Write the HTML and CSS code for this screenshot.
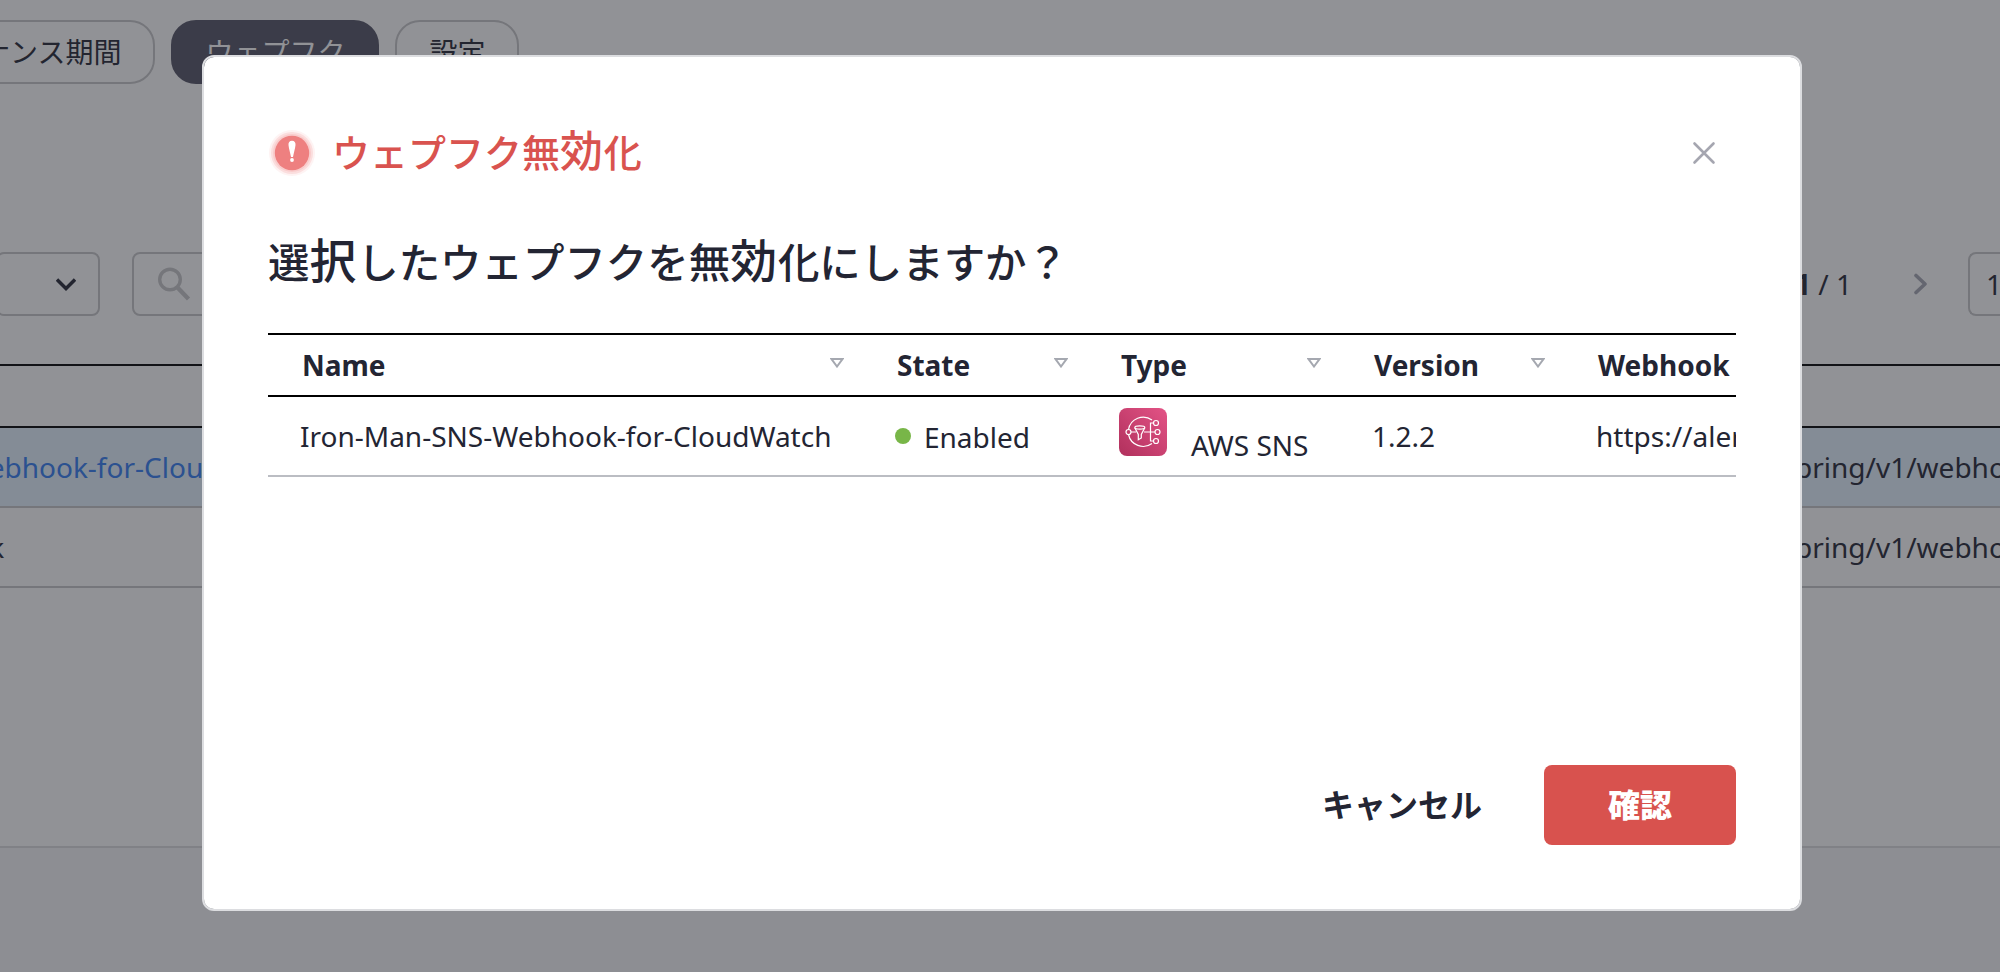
FILE: index.html
```html
<!DOCTYPE html>
<html lang="ja">
<head>
<meta charset="utf-8">
<title>ウェプフク</title>
<link rel="stylesheet" href="styles.css">
</head>
<body>
<div class="page">
  <nav class="tabs">
    <span class="tab">メンテナンス期間</span>
    <span class="tab tab-active">ウェプフク</span>
    <span class="tab">設定</span>
  </nav>
  <div class="toolbar">
    <div class="select">
      <svg width="20" height="13" viewBox="0 0 20 13" fill="none" stroke="#232533" stroke-width="3.4"><path d="M1 1.500L10 10.500L19 1.500"/></svg>
    </div>
    <div class="search">
      <svg width="34" height="34" viewBox="0 0 34 34" fill="none" stroke="#c7c7c8"><circle cx="13" cy="12.500" r="10.300" stroke-width="3.400"/><path d="M20.500 20.500L31.500 32" stroke-width="4.400"/></svg>
    </div>
    <div class="pager">
      <span class="pager-text"><b>1</b> / 1</span>
      <svg width="14" height="22" viewBox="0 0 14 22" fill="none" stroke="#a5a6b2" stroke-width="3.600" stroke-linecap="round" stroke-linejoin="round"><path d="M2 2.500L11 11L2 19.500"/></svg>
    </div>
    <div class="page-size">15</div>
  </div>
  <div class="list">
    <div class="list-head"></div>
    <div class="list-row selected"><span class="link">Iron-Man-SNS-Webhook-for-CloudWatch</span><span class="list-url">pring/v1/webhook</span></div>
    <div class="list-row"><span class="list-name">webhook</span><span class="list-url">pring/v1/webhook</span></div>
  </div>
  <div class="page-bottom"></div>
</div>
<div class="backdrop">
  <section class="modal">
    <header class="modal-head">
      <svg class="alert" width="48" height="48" viewBox="0 0 48 48">
        <circle cx="24" cy="24" r="23" fill="#fef3f3"/><circle cx="24" cy="24" r="21" fill="#fbdede"/><circle cx="24" cy="24" r="19" fill="#f9cccc"/><circle cx="24" cy="24" r="17.200" fill="#ee8080"/>
        <path d="M24 11.800C26.500 11.800 27.700 13.600 27.500 16C27.200 19.500 25.700 24 25 28H23C22.300 24 20.800 19.500 20.500 16C20.300 13.600 21.500 11.800 24 11.800Z" fill="#fff"/><circle cx="24" cy="31" r="1.900" fill="#fff"/>
      </svg>
      <h1 class="modal-title">ウェプフク無<span class="wide">効</span>化</h1>
      <svg class="close" width="24" height="24" viewBox="0 0 24 24" fill="none" stroke="#a5a6b0" stroke-width="2.600" stroke-linecap="round"><path d="M2.500 2.500L21.500 21.500M21.500 2.500L2.500 21.500"/></svg>
    </header>
    <p class="question">選<span class="wide">択</span>したウェプフクを無<span class="wide">効</span>化にしますか？</p>
    <div class="table">
      <div class="tr th-row">
        <div class="th th-first">Name<svg class="sort" width="14" height="10" viewBox="0 0 14 10"><path d="M1.500 1H12.500L7 8.500Z"/></svg></div>
        <div class="th">State<svg class="sort" width="14" height="10" viewBox="0 0 14 10"><path d="M1.500 1H12.500L7 8.500Z"/></svg></div>
        <div class="th">Type<svg class="sort" width="14" height="10" viewBox="0 0 14 10"><path d="M1.500 1H12.500L7 8.500Z"/></svg></div>
        <div class="th">Version<svg class="sort" width="14" height="10" viewBox="0 0 14 10"><path d="M1.500 1H12.500L7 8.500Z"/></svg></div>
        <div class="th">Webhook</div>
      </div>
      <div class="tr td-row">
        <div class="td td-first">Iron-Man-SNS-Webhook-for-CloudWatch</div>
        <div class="td state"><i class="dot"></i><span>Enabled</span></div>
        <div class="td type">
          <svg width="48" height="48" viewBox="0 0 48 48" fill="none" stroke="#fff" stroke-width="1.200">
            <defs><linearGradient id="sns" x1="0" y1="1" x2="1" y2="0"><stop offset="0" stop-color="#b0305c"/><stop offset="1" stop-color="#e35386"/></linearGradient></defs>
            <rect width="48" height="48" rx="8" fill="url(#sns)" stroke="none"/>
            <path d="M33 12A15 15 0 0 0 9.500 21.500M9.500 26.500A15 15 0 0 0 33 35.500"/>
            <circle cx="9.500" cy="24" r="2.500"/><circle cx="37" cy="15" r="2.500"/><circle cx="38.500" cy="24" r="2.500"/><circle cx="37" cy="33" r="2.500"/>
            <path d="M34.500 15H31.500V33H34.500M25 24H36M12 24H17"/>
            <ellipse cx="20.800" cy="19.500" rx="5" ry="1.600"/><path d="M15.800 19.800L19.300 26.500V31.800L22.300 30V26.500L25.800 19.800"/>
          </svg><span>AWS SNS</span>
        </div>
        <div class="td">1.2.2</div>
        <div class="td">https://alerting</div>
      </div>
    </div>
    <footer class="modal-foot">
      <button class="btn btn-cancel">キャンセル</button>
      <button class="btn btn-ok">確認</button>
    </footer>
  </section>
</div>
</body>
</html>
```
FILE: styles.css
```css
* { box-sizing: border-box; }
body {
  margin: 0;
  width: 2000px;
  height: 972px;
  overflow: hidden;
  font: 28px/40px "Noto Sans", "Noto Sans CJK JP", sans-serif;
  color: #232533;
  background: #fff;
}
svg { display: block; flex: none; }
.page { width: 2000px; height: 972px; overflow: hidden; display: flex; flex-direction: column; }
.tabs { display: flex; gap: 16px; margin-left: -136px; padding-top: 20px; }
.tab {
  height: 64px;
  padding: 0 32px;
  border: 2px solid #c7c7c8;
  border-radius: 25px;
  line-height: 59px;
  white-space: nowrap;
  font-family: "Noto Sans CJK JP", sans-serif;
}
.tab-active { background: #535364; border-color: #535364; color: #fff; }
.toolbar { display: flex; margin-top: 168px; height: 64px; }
.select, .search, .page-size { border: 2px solid #c7c7c8; border-radius: 8px; display: flex; align-items: center; }
.select { width: 104px; margin-left: -4px; justify-content: flex-end; padding-right: 22px; }
.search { width: 1000px; margin-left: 32px; padding-left: 23px; }
.pager { margin-left: auto; display: flex; align-items: center; gap: 62px; margin-right: 40px; }
.pager-text { white-space: nowrap; }
.page-size { width: 32px; border-right: 0; border-radius: 8px 0 0 8px; padding-left: 16px; overflow: hidden; }
.list { margin-top: 48px; border-top: 2px solid #000; }
.list-head { height: 62px; border-bottom: 2px solid #000; }
.list-row { height: 80px; border-bottom: 2px solid #c7c7c8; display: flex; align-items: center; justify-content: space-between; white-space: nowrap; overflow: hidden; }
.selected { background: #e5f2fe; }
.link { color: #337df2; margin-left: -229px; }
.list-name { margin-left: -117px; }
.list-url { width: 205px; overflow: hidden; }
.page-bottom { margin-top: 258px; flex: 1; border-top: 2px solid #dddddf; background: #f7f7f8; }
.backdrop {
  position: absolute;
  inset: 0;
  background: rgba(35, 37, 46, .5);
  padding: 55px 198px 61px 202px;
}
.modal {
  width: 1600px;
  height: 856px;
  background: #fff;
  background-clip: padding-box;
  border: 2px solid #dcdde0;
  border-radius: 12px;
  padding: 64px;
  display: flex;
  flex-direction: column;
}
.modal-head { display: flex; align-items: center; height: 64px; }
.modal-title {
  margin: 0 0 5px 16px;
  font: 500 38px/60px "Noto Sans CJK JP", sans-serif;
  color: #d9534f;
}
.wide { font-size: 1.13em; line-height: 1; letter-spacing: .02em; }
.close { margin: 0 20px 0 auto; }
.question { margin: 45px 0 0; height: 60px; font: 500 41.450px/60px "Noto Sans CJK JP", sans-serif; white-space: nowrap; }
.table { margin-top: 43px; overflow: hidden; }
.tr { display: grid; grid-template-columns: 596px 224px 253px 224px 171px; }
.th-row { height: 64px; border-top: 2px solid #000; border-bottom: 2px solid #000; font-weight: 700; }
.td-row { height: 80px; border-bottom: 2px solid #bbbdc3; }
.th { display: flex; justify-content: space-between; align-items: center; padding: 0 20px 0 33px; white-space: nowrap; }
.th-first { padding-left: 34px; }
.sort { fill: none; stroke: #a5a8b0; stroke-width: 2; margin-top: -5px; }
.td { display: flex; align-items: center; padding-left: 31px; white-space: nowrap; overflow: hidden; }
.td-first { padding-left: 32px; }
.state { gap: 13px; }
.state span { padding-top: 2px; }
.dot { width: 16px; height: 16px; border-radius: 50%; background: #78b648; }
.type { padding-bottom: 8px; gap: 24px; }
.type span { padding-top: 26px; }
.modal-foot { margin-top: auto; display: flex; justify-content: flex-end; }
.btn {
  border: 0;
  height: 80px;
  padding: 0 64px 4px;
  border-radius: 8px;
  font: 700 32px/76px "Noto Sans CJK JP", sans-serif;
  color: #232533;
  background: none;
}
.btn-cancel { padding-right: 62px; }
.btn-ok { background: #d8524e; color: #fff; font-weight: 900; }
```
